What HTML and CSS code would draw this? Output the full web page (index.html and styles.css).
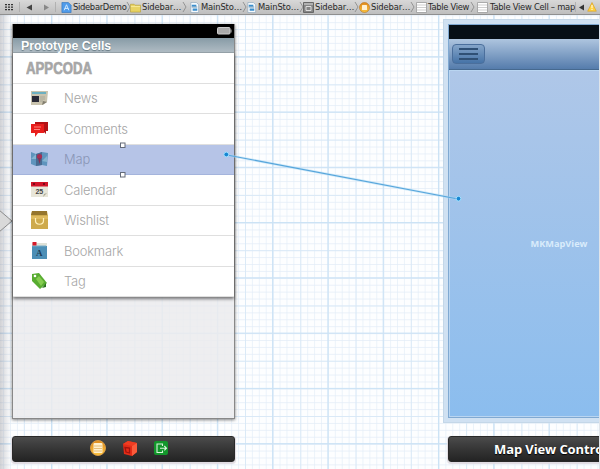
FILE: index.html
```html
<!DOCTYPE html>
<html lang="en">
<head>
<meta charset="utf-8">
<title>Storyboard</title>
<link rel="stylesheet" href="styles.css">
</head>
<body>
<svg class="defs" width="0" height="0" aria-hidden="true">
  <defs>
    <linearGradient id="gold" x2="0" y2="1"><stop stop-color="#e08a1c"/><stop offset="1" stop-color="#fbc33f"/></linearGradient>
    <symbol id="sep" viewBox="0 0 5 12"><path d="M1 1 4 6 1 11" fill="none" stroke="#858585" stroke-width=".8"/></symbol>
    <symbol id="doc" viewBox="0 0 10 12"><path d="M1 .5h6L9.500 3v8.500H1z" fill="#f6fafd" stroke="#8ca4b8" stroke-width=".7"/><path d="M2 3h5v2H2zM3 7h5v2.500H3z" fill="#3b8fce"/><path d="M2 5.500h6" stroke="#27618f" stroke-width=".7"/></symbol>
    <symbol id="table" viewBox="0 0 11 11"><path d="M.5.500h10v10H.5z" fill="#fff" stroke="#9a9a9a" stroke-width=".8"/><path d="M1 3h9M1 5.500h9M1 8h9" stroke="#c2c2c2" stroke-width=".8"/></symbol>
  </defs>
</svg>
<nav class="jumpbar">
  <svg class="tools" viewBox="0 0 56 14"><path d="M5 4.700h2M8 4.700h2M11 4.700h2M5 7.200h2M8 7.200h2M11 7.200h2M5 9.700h2M8 9.700h2M11 9.700h2" stroke="#333" stroke-width="1.300"/><path d="M19.500 2v10M55.500 2v10" stroke="#aaa" stroke-width=".8"/><path d="M32 4.500v6L26.500 7.500z" fill="#444"/><path d="M44 4.500v6L49 7.500z" fill="#888"/></svg>
  <div class="crumb c1"><svg viewBox="0 0 11 12"><path d="M.5.500h7L10.500 3.500v8H.5z" fill="#4f9bea" stroke="#3173bd" stroke-width=".7"/><path d="m3 9 2.500-6L8 9M3.500 7h4" fill="none" stroke="#d8edff"/></svg><span>SidebarDemo</span><svg class="sep"><use href="#sep"/></svg></div>
  <div class="crumb c2"><svg viewBox="0 0 12 11"><path d="M.5 2h4l1 1h6v7.500H.5z" fill="#e8d363" stroke="#b8a136" stroke-width=".7"/><path d="M1 4.500h10" stroke="#f7eb9d"/></svg><span>Sidebar…</span><svg class="sep"><use href="#sep"/></svg></div>
  <div class="crumb c3"><svg><use href="#doc"/></svg><span>MainSto…</span><svg class="sep"><use href="#sep"/></svg></div>
  <div class="crumb c4"><svg><use href="#doc"/></svg><span>MainSto…</span><svg class="sep"><use href="#sep"/></svg></div>
  <div class="crumb c5"><svg viewBox="0 0 11 11"><path d="M.5.500h10v10H.5z" fill="#858585" stroke="#686868"/><path d="M1 2h9M3 4.500h5v4H3z" fill="none" stroke="#ddd"/></svg><span>Sidebar…</span><svg class="sep"><use href="#sep"/></svg></div>
  <div class="crumb c6"><svg viewBox="0 0 11 11"><circle cx="5.500" cy="5.500" r="5" fill="url(#gold)" stroke="#bb741b" stroke-width=".6"/><rect x="3" y="3" width="5" height="5" rx=".6" fill="#fff1d2"/></svg><span>Sidebar…</span><svg class="sep"><use href="#sep"/></svg></div>
  <div class="crumb c7"><svg><use href="#table"/></svg><span>Table View</span><svg class="sep"><use href="#sep"/></svg></div>
  <div class="crumb c8"><svg><use href="#table"/></svg><span>Table View Cell – map</span></div>
  <svg class="issues" viewBox="0 0 24 14"><path d="M.5 2v10" stroke="#aaa" stroke-width=".8"/><path d="M9 4.500v6L4 7.500z" fill="#333"/><path d="m17 2.500 4.300 8.700h-8.600z" fill="#ffd13b" stroke="#d79c20" stroke-width=".6"/><path d="M17 5v3.300M17 9v1" stroke="#fff"/></svg>
</nav>
<main class="canvas">
  <svg class="grid" width="600" height="454">
    <defs>
      <pattern id="minor" width="6.910" height="6.910" x="51.500" y="41.700" patternUnits="userSpaceOnUse"><path d="M0 0H6.910M0 0V6.910" stroke="#e3edf8" stroke-width="1.300"/></pattern>
      <pattern id="mid" width="27.640" height="27.640" x="51.500" y="41.700" patternUnits="userSpaceOnUse"><path d="M0 .5H27.640M.5 0V27.640" stroke="#d6e7f6" stroke-width=".8"/></pattern>
      <pattern id="major" width="55.280" height="55.280" x="51" y="41.200" patternUnits="userSpaceOnUse"><path d="M0 .5H55.280M.5 0V55.280" stroke="#cbe2f5"/></pattern>
    </defs>
    <path fill="url(#minor)" d="M0 0h600v454H0z"/><path fill="url(#mid)" d="M0 0h600v454H0z"/><path fill="url(#major)" d="M0 0h600v454H0z"/>
  </svg>
  <div class="edge"></div>
  <svg class="entry" viewBox="0 0 13 22"><path d="M-1 0 12 11-1 22z" fill="#d9d9d9" stroke="#8c8c8c"/></svg>

  <section class="scene sidebar">
    <div class="status"><svg viewBox="0 0 15 8"><rect x=".5" y=".5" width="12.500" height="6.500" rx="1" fill="#aaa" stroke="#ccc"/><path d="M14 2.500v3" stroke="#bbb"/></svg></div>
    <h1>Prototype Cells</h1>
    <div class="table">
      <div class="row brand"><svg viewBox="0 0 80 20"><text x="0" y="16" textLength="66" lengthAdjust="spacingAndGlyphs">APPCODA</text></svg></div>
      <div class="row"><svg viewBox="0 0 18 18"><path d="M1 2h17l-1 11-4 3H1z" fill="#c9c3ae"/><path d="M2 4h14" stroke="#4caac7" stroke-width="1.500"/><path d="M2 7h7v6H2z" fill="#292936"/><path d="M10 8h5M10 10h5M10 12h3" stroke="#a5a294" stroke-width=".8"/><path d="m12 16 1-4 4 1z" fill="#827e70"/></svg><span>News</span></div>
      <div class="row"><svg viewBox="0 0 18 18"><path d="M5 2h13v9h-2v3l-3-3H5z" fill="#b41215"/><path d="M1 4h13v9H8l-3 4v-4H1z" fill="#e91e1c"/><path d="M4 7h7M4 9.500h6" stroke="#ff827b"/></svg><span>Comments</span></div>
      <div class="row selected"><svg viewBox="0 0 18 18"><path d="m1 2 5 2 6-2 6 1-1 13-5-1-6 1-5-2z" fill="#5f94bd"/><path d="m6 4 6-2v13l-6 1z" fill="#496b91"/><path d="m1 9 5-5v5zM12 11l5-5v6z" fill="#84b4d0"/><circle cx="9.500" cy="6.500" r="2.600" fill="#a62f54"/><path d="m8 8 1.500 6L11 8z" fill="#8a3053"/></svg><span>Map</span></div>
      <div class="row"><svg viewBox="0 0 18 18"><path d="M1 2h17v14H1z" fill="#e8e6d9"/><path d="M1 1h17v4.500H1z" fill="#d11328"/><path d="M4 2v2M14 2v2" stroke="#7b0818" stroke-width="2"/><text class="date" x="5.500" y="12.500">25</text><path d="m13 16 1-3 3-1z" fill="#aaa795"/></svg><span>Calendar</span></div>
      <div class="row"><svg viewBox="0 0 18 18"><path d="m2 0h15l1 5v13H1V5z" fill="#ceaa4c"/><path d="M2 0h15v4H1z" fill="#95752d"/><path d="M1 5h17v3H1z" fill="#dfbb60"/><path d="M5.500 7v2.500c0 5 8 5 8 0V7" fill="none" stroke="#fff0bb" stroke-width="1.200"/></svg><span>Wishlist</span></div>
      <div class="row"><svg viewBox="0 0 18 18"><path d="M2 1h15v4H2z" fill="#dfe1d7"/><path d="M2 4h15v13H2z" fill="#4d8fb6"/><path d="M2 4h14" stroke="#76adc8"/><path d="M2.500 0h4v3.500h-4z" fill="#d51a2a"/><text class="letter" x="6" y="14">A</text></svg><span>Bookmark</span></div>
      <div class="row"><svg viewBox="0 0 18 18"><path d="m2 2 7-1 8 10-7 6L2 9z" fill="#58ac31"/><path d="m6 7 3-3 5 6-3 4z" fill="#85cd50"/><path d="m12 16 4-5v4z" fill="#28721c"/><circle cx="5" cy="4" r="1.300" fill="#fff"/></svg><span>Tag</span></div>
    </div>
  </section>

  <div class="dock left">
    <svg viewBox="0 0 18 18"><circle cx="9" cy="9" r="7.500" fill="url(#gold)" stroke="#d69a43"/><rect x="4.500" y="4" width="9" height="10" rx="1" fill="#fff0cd"/><path d="M5 7h8M5 9.500h8M5 12h8" stroke="#dda955" stroke-width=".7"/></svg>
    <svg viewBox="0 0 18 18"><path d="m2 5 5-3 9 2v9l-5 4-8-2z" fill="#e52c17"/><path d="m2 5 5-3 9 2-5 3z" fill="#ef3d22"/><path d="m11 7 5-3v9l-5 4z" fill="#fa5b3b"/><path d="M4 8.500 8.500 9v5L5 13z" fill="none" stroke="#a3140e" stroke-width="1.300"/></svg>
    <svg viewBox="0 0 18 18"><rect x="2" y="2" width="14" height="14" rx="2" fill="#12962b"/><path d="M10.500 7V5H5v8.500h5.500V11.500M8 9.200h6.500M12.300 7l2.200 2.200-2.200 2.200" fill="none" stroke="#d9f3dc" stroke-width="1.100"/></svg>
  </div>

  <section class="scene map">
    <div class="status"></div>
    <header><button aria-label="Menu"><i></i><i></i><i></i></button></header>
    <div class="mapview">MKMapView</div>
  </section>
  <div class="dock right">Map View Controller</div>

  <svg class="segue" width="600" height="454"><path d="M227 140 458 184" stroke="#a9d9f6" stroke-width="2.500" opacity=".5"/><path d="M227 140 458 184" stroke="#56a5db" stroke-width="1.100"/><g fill="#1686d2" stroke="#a4e0ff"><circle cx="226.300" cy="139.500" r="2.400"/><circle cx="458.500" cy="183.700" r="2.400"/></g><g fill="#fff" stroke="#646b79"><rect x="120.500" y="128" width="4.500" height="4.500"/><rect x="120.500" y="157.500" width="4.500" height="4.500"/></g></svg>
  <div class="divider"></div>
</main>
</body>
</html>
```
FILE: styles.css
```css
* { box-sizing: border-box; }
body { margin: 0; width: 600px; height: 469px; overflow: hidden; font-family: "Liberation Sans", sans-serif; }
.defs { position: absolute; }
svg { display: block; flex: none; }
.jumpbar { display: flex; align-items: center; width: 600px; height: 15px; background: linear-gradient(#d8d8d8, #bebebe); border-bottom: 1px solid #8f8f8f; }
.tools { width: 56px; height: 14px; margin-right: 5px; }
.crumb { display: flex; align-items: center; height: 14px; flex: none; font: 8.400px/14px "DejaVu Sans", sans-serif; letter-spacing: -.31px; color: #292929; white-space: nowrap; }
.crumb svg { width: 11px; height: 11px; }
.crumb span { margin-left: 1px; }
.crumb .sep { width: 5px; height: 12px; margin: 0 2px 0 auto; }
.c1 { width: 69px; } .c2 { width: 59px; } .c3 { width: 57px; } .c4 { width: 57px; } .c5 { width: 56px; } .c6 { width: 57px; } .c7 { width: 61px; } .c8 { width: 98px; }
.c2 span, .c3 span, .c4 span, .c5 span, .c6 span { letter-spacing: -.15px; }
.c8 span { margin-left: 2px; letter-spacing: -.27px; }
.issues { width: 24px; height: 14px; }
.canvas { position: relative; width: 600px; height: 454px; overflow: hidden; background: #fdfeff; }
.grid, .segue { position: absolute; left: 0; top: 0; }
.edge { position: absolute; inset: 0 auto 0 0; width: 11px; background: linear-gradient(90deg, rgba(105,105,115,.3), transparent); }
.divider { position: absolute; inset: 0 0 0 auto; width: 1px; background: #dfe4ea; }
.entry { position: absolute; left: 0; top: 195px; width: 13px; height: 22px; }
.scene { position: absolute; display: flex; flex-direction: column; }
.sidebar { left: 12px; top: 9px; width: 223px; height: 395px; background: rgba(235,235,237,.85); border: 1px solid #888; border-top: 0; box-shadow: 0 1px 3px rgba(0,0,0,.5); }
.status { height: 14px; background: #000; flex: none; }
.status svg { width: 15px; height: 8px; margin: 3px 2px 0 auto; }
h1 { display: flex; align-items: center; height: 15px; margin: 0; padding: 1px 0 0 8px; color: #fff; background: linear-gradient(#879ba6, #afbbc3); border-bottom: 1px solid #99a5ac; font-size: 12.300px; line-height: 14px; text-shadow: 0 1px 1px #657982; flex: none; }
.table { background: #fff; box-shadow: 0 2px 3px rgba(0,0,0,.5); }
.row { display: flex; align-items: center; height: 30.500px; padding-left: 17px; border-bottom: 1px solid #dfdfdf; color: #a6a6a6; font: 300 12.900px/20px Inter, sans-serif; letter-spacing: -.15px; }
.row > svg { width: 18px; height: 18px; }
.row > span { margin: 2px 0 0 16px; }
.row.brand { padding-left: 13px; }
.row.brand svg { width: 80px; height: 20px; }
.brand text { font: bold 16.800px "Liberation Sans Narrow", "Liberation Sans", sans-serif; letter-spacing: 0; fill: #a6a6a6; stroke: #a6a6a6; stroke-width: .7px; }
.row.selected { background: #b6c4e7; border-color: #a4b4dc; color: #8a96b6; }
.date { font: bold 7px "Liberation Sans", sans-serif; fill: #454545; }
.letter { font: bold 9px "Liberation Serif", serif; fill: #203e55; }
.dock { position: absolute; display: flex; align-items: center; top: 421px; height: 26px; background: linear-gradient(rgba(72,72,72,.98), rgba(50,50,50,.98) 50%, rgba(31,31,31,.98)); border: 1px solid #292929; border-radius: 3px; box-shadow: 0 1px 1px 1px #dfdbe2; color: #fff; }
.left { left: 12px; width: 223px; justify-content: center; gap: 13.500px; padding: 0 0 2px 12px; }
.left svg { width: 18px; height: 18px; }
.right { left: 448px; width: 222px; padding-left: 45px; font: bold 13px/24px "Open Sans", sans-serif; letter-spacing: -.1px; white-space: nowrap; text-shadow: 0 1px 1px #000; }
.map { left: 448px; top: 9px; width: 222px; height: 394px; border: 1px solid #80a9d2; box-shadow: 0 0 0 4px rgba(214,230,246,.7), 0 0 0 5px #c4d7e8; }
.map .status { background: #070f16; }
.map header { height: 31px; padding: 5px 3px; background: linear-gradient(#aec5df, #557cac); border-bottom: 1px solid #46698f; flex: none; }
.map button { display: flex; flex-direction: column; align-items: center; justify-content: center; gap: 3px; width: 33px; height: 20px; padding: 0; border: 1px solid #4b6f9c; border-radius: 4px; background: linear-gradient(#85a5c9, #4673a7); }
.map i { width: 19px; height: 2px; background: #2f5075; }
.mapview { flex: 1; display: flex; align-items: center; justify-content: center; border: 1px solid #b9d5f1; background: linear-gradient(#afc7e8, #8bbdee); color: #d9ecfb; font: bold 9.200px "Open Sans", sans-serif; }
```
